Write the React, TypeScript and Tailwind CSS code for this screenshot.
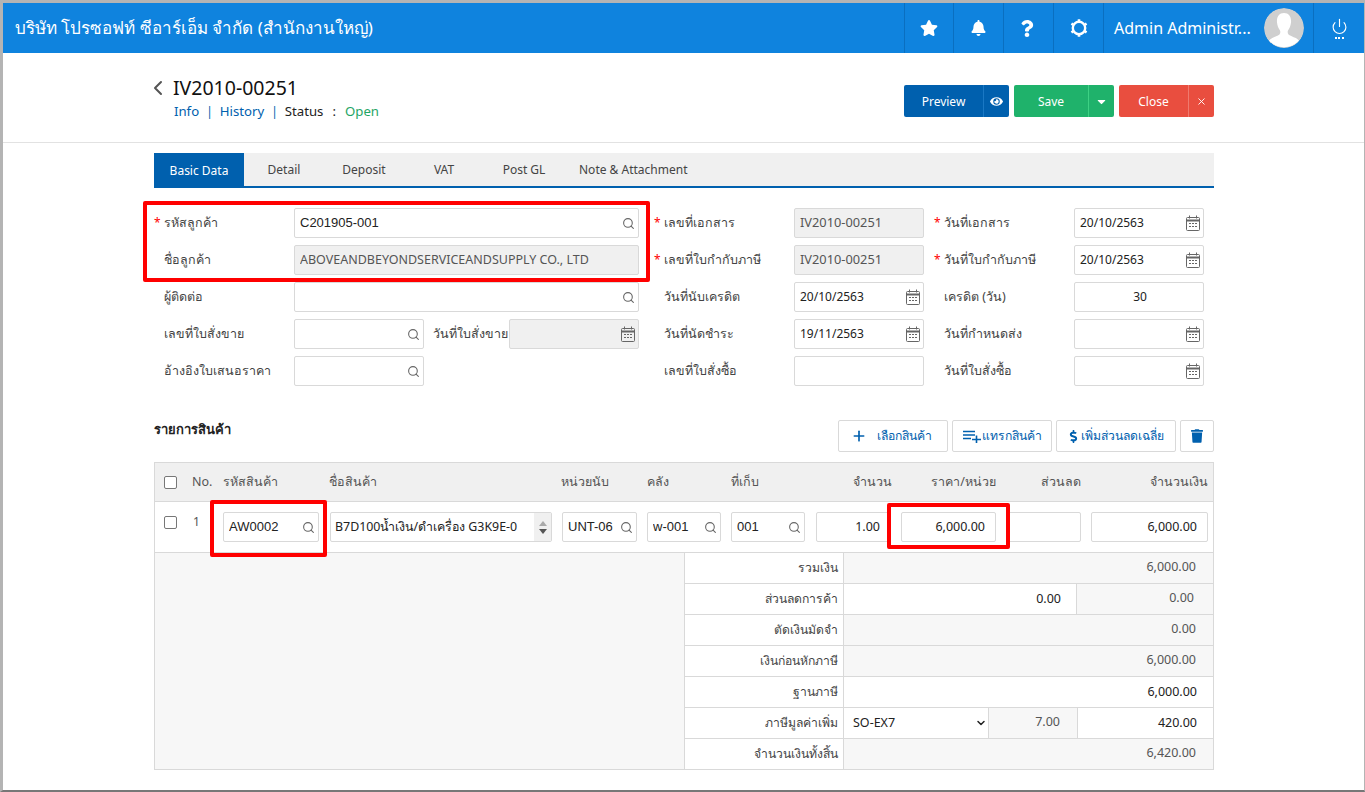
import { Search, Power, Plus, X, ChevronLeft, ChevronDown } from 'lucide-react'
import { FaStar, FaBell, FaQuestion, FaEye, FaTrash, FaDollarSign, FaCaretDown } from 'react-icons/fa'

function CalIcon() {
  return (
    <svg className="w-[14px] h-[16px] text-[#666]" viewBox="0 0 14 16" fill="none" stroke="currentColor">
      <rect x="0.5" y="2.5" width="13" height="13" rx="1" />
      <path d="M0.5 5.5h13" strokeWidth="2" />
      <path d="M3.5 0.5v3M10.5 0.5v3" />
      <path d="M3 8.5h2M6 8.5h2M9 8.5h2M3 11.5h2M6 11.5h2M9 11.5h2" />
    </svg>
  )
}

function SearchIcon() {
  return <Search className="w-[13px] h-[13px] text-[#666]" strokeWidth={2} />
}

function Field({ value, w, gray, icon, align, cls }: {
  value?: string
  w: string
  gray?: boolean
  icon?: 'search' | 'cal'
  align?: string
  cls?: string
}) {
  return (
    <div className={`${w} h-[30px] shrink-0 border border-[#d9d9d9] rounded-[2px] flex items-center pl-[5px] pr-[3px] ${gray ? 'bg-[#f0f0f0] text-[#555]' : 'bg-white text-[#222]'}`}>
      <span className={`flex-1 whitespace-nowrap overflow-hidden ${align ?? ''} ${cls ?? 'text-[12.5px]'}`}>{value}</span>
      {icon === 'search' && <SearchIcon />}
      {icon === 'cal' && <CalIcon />}
    </div>
  )
}

function Label({ text, req, w }: { text: string; req?: boolean; w: string }) {
  return (
    <div className={`${w} shrink-0 h-[30px] flex items-center text-[12.5px] text-[#444] whitespace-nowrap`}>
      <span className="w-[10px] text-[#f00] text-[12px] leading-none">{req ? '*' : ''}</span>
      {text}
    </div>
  )
}

function Head({ text, w, right }: { text: string; w: string; right?: boolean }) {
  return <div className={`${w} shrink-0 text-[12.5px] text-[#555] whitespace-nowrap ${right ? 'text-right' : ''}`}>{text}</div>
}

function SumRow({ label, children }: { label: string; children: React.ReactNode }) {
  return (
    <div className="h-[31px] last:h-[30px] flex border-b border-[#d9d9d9] last:border-b-0 text-[12.5px]">
      <div className="w-[159px] shrink-0 bg-white border-r border-[#d9d9d9] flex items-center justify-end pr-[5px] text-[12.2px] text-[#444]">{label}</div>
      {children}
    </div>
  )
}

function ToolBtn({ children, w }: { children: React.ReactNode; w: string }) {
  return (
    <div className={`${w} h-[32px] border border-[#d9d9d9] rounded-[2px] bg-white flex items-center justify-center text-[12.2px] text-[#0060ae] whitespace-nowrap`}>
      {children}
    </div>
  )
}

const arial = "font-['Liberation_Sans',sans-serif] text-[13px]"
const date = 'text-[12px]'
const amount = 'text-[12.5px] pr-[7px]'

export default function App() {
  return (
    <div className="relative w-[1365px] h-[792px] overflow-hidden bg-white border-t-[3px] border-l-[3px] border-r border-b-2 border-t-[#b4b4b4] border-l-[#b4b4b4] border-r-[#b4b4b4] border-b-[#777] font-['Noto_Sans','Liberation_Sans',sans-serif]">
      {/* top bar */}
      <div className="h-[50px] bg-[#0f83de] flex items-center text-white">
        <div className="flex-1 pl-[12px] text-[17px] whitespace-nowrap">บริษัท โปรซอฟท์ ซีอาร์เอ็ม จำกัด (สำนักงานใหญ่)</div>
        <div className="w-[49px] h-full border-l border-[#0a6fc0] flex items-center justify-center"><FaStar className="w-[18px] h-[18px]" /></div>
        <div className="w-[50px] h-full border-l border-[#0a6fc0] flex items-center justify-center"><FaBell className="w-[15px] h-[16px]" /></div>
        <div className="w-[50px] h-full border-l border-[#0a6fc0] flex items-center justify-center"><FaQuestion className="w-[14px] h-[17px] -ml-[3px]" /></div>
        <div className="w-[50px] h-full border-l border-[#0a6fc0] flex items-center justify-center">
          <svg className="w-[18px] h-[18px]" viewBox="0 0 18 18" fill="none" stroke="white">
            <circle cx="9" cy="9" r="6.200" strokeWidth="2.400" />
            <path d="M9 0.2v2M9 15.800v2M1.400 4.600l1.700 1M14.900 12.400l1.700 1M1.400 13.400l1.700-1M14.900 5.600l1.700-1" strokeWidth="2.600" />
          </svg>
        </div>
        <div className="w-[210px] h-full border-l border-[#0a6fc0] flex items-center pl-[10px] gap-[10px]">
          <span className="w-[140px] text-[16px] whitespace-nowrap">Admin Administr...</span>
          <svg className="w-[40px] h-[40px] rounded-full" viewBox="0 0 40 40">
            <circle cx="20" cy="20" r="20" fill="#cfcfcf" />
            <path d="M20 5c5 0 7.500 4 7 9.500-.3 3-1.500 6-3 8-.5 1-.5 3 .5 4 2.500 2 8 3 10.500 6a20 20 0 0 1-30 0c2.500-3 8-4 10.500-6 1-1 1-3 .5-4-1.500-2-2.700-5-3-8C12.500 9 15 5 20 5z" fill="white" />
          </svg>
        </div>
        <div className="w-[51px] h-full border-l border-[#0a6fc0] flex flex-col items-center justify-center">
          <Power className="w-[17px] h-[17px]" strokeWidth={1.6} />
          <span className="w-[9px] mt-[2px] border-t-2 border-dotted border-white"></span>
        </div>
      </div>

      {/* title + actions */}
      <div className="h-[90px] border-b border-[#e2e2e2] pl-[151px] pr-[150px] flex justify-between">
        <div className="pt-[23px]">
          <div className="flex items-center h-[24px] text-[19.500px] text-[#111]">
            <ChevronLeft className="w-[24px] h-[24px] text-[#555] -ml-[8px] mr-[3px]" strokeWidth={2} />
            <span>IV2010-00251</span>
          </div>
          <div className="flex items-center pl-[20px] text-[13.200px] h-[20px] mt-[2px] whitespace-nowrap">
            <span className="text-[#0060ae]">Info</span>
            <span className="mx-[7px] text-[#0060ae] text-[12px]">|</span>
            <span className="text-[#0060ae]">History</span>
            <span className="mx-[7px] text-[#0060ae] text-[12px]">|</span>
            <span className="text-[#222]">Status</span>
            <span className="mx-[9px] text-[#222]">:</span>
            <span className="text-[#1fa566]">Open</span>
          </div>
        </div>
        <div className="pt-[32px] flex gap-[5px] text-[12px] text-white">
          <div className="w-[105px] h-[32px] bg-[#0060ae] rounded-[2px] flex">
            <div className="w-[80px] pt-[1px] flex items-center justify-center border-r border-[#1a78c4]">Preview</div>
            <div className="flex-1 flex items-center justify-center"><FaEye className="w-[13px] h-[13px]" /></div>
          </div>
          <div className="w-[100px] h-[32px] bg-[#1fb26b] rounded-[2px] flex">
            <div className="w-[75px] pt-[1px] flex items-center justify-center border-r border-[#3dd184]">Save</div>
            <div className="flex-1 flex items-center justify-center"><FaCaretDown className="w-[13px] h-[13px]" /></div>
          </div>
          <div className="w-[95px] h-[32px] bg-[#e94e3f] rounded-[2px] flex">
            <div className="w-[70px] pt-[1px] flex items-center justify-center border-r border-[#ef7a6e]">Close</div>
            <div className="flex-1 flex items-center justify-center"><X className="w-[11px] h-[11px]" /></div>
          </div>
        </div>
      </div>

      <div className="pl-[151px] w-[1211px]">
        {/* tabs */}
        <div className="mt-[10px] h-[35px] bg-[#f0f0f0] border-b-2 border-[#0060ae] flex text-[12px] text-[#444]">
          <div className="w-[90px] h-[35px] bg-[#0060ae] text-white flex items-center justify-center">Basic Data</div>
          <div className="w-[80px] flex items-center justify-center">Detail</div>
          <div className="w-[80px] flex items-center justify-center">Deposit</div>
          <div className="w-[80px] flex items-center justify-center">VAT</div>
          <div className="w-[80px] flex items-center justify-center">Post GL</div>
          <div className="flex items-center ml-[15px]">Note &amp; Attachment</div>
        </div>

        {/* form */}
        <div className="mt-[20px] flex flex-col gap-[7px]">
          <div className="flex">
            <div className="w-[500px] flex">
              <Label text="รหัสลูกค้า" req w="w-[140px]" />
              <Field value="C201905-001" w="w-[345px]" icon="search" cls={arial} />
            </div>
            <Label text="เลขที่เอกสาร" req w="w-[140px]" />
            <Field value="IV2010-00251" w="w-[130px]" gray cls="text-[12.800px]" />
            <Label text="วันที่เอกสาร" req w="w-[150px] pl-[10px]" />
            <Field value="20/10/2563" w="w-[130px]" icon="cal" cls={date} />
          </div>
          <div className="flex">
            <div className="w-[500px] flex">
              <Label text="ชื่อลูกค้า" w="w-[140px]" />
              <Field value="ABOVEANDBEYONDSERVICEANDSUPPLY CO., LTD" w="w-[345px]" gray />
            </div>
            <Label text="เลขที่ใบกำกับภาษี" req w="w-[140px]" />
            <Field value="IV2010-00251" w="w-[130px]" gray cls="text-[12.800px]" />
            <Label text="วันที่ใบกำกับภาษี" req w="w-[150px] pl-[10px]" />
            <Field value="20/10/2563" w="w-[130px]" icon="cal" cls={date} />
          </div>
          <div className="flex">
            <div className="w-[500px] flex">
              <Label text="ผู้ติดต่อ" w="w-[140px]" />
              <Field w="w-[345px]" icon="search" />
            </div>
            <Label text="วันที่นับเครดิต" w="w-[140px]" />
            <Field value="20/10/2563" w="w-[130px]" icon="cal" cls={date} />
            <Label text="เครดิต (วัน)" w="w-[150px] pl-[10px]" />
            <Field value="30" w="w-[130px]" align="text-center" cls={date} />
          </div>
          <div className="flex">
            <div className="w-[500px] flex">
              <Label text="เลขที่ใบสั่งขาย" w="w-[140px]" />
              <Field w="w-[130px]" icon="search" />
              <div className="w-[85px] shrink-0 h-[30px] flex items-center justify-end pr-[1px] text-[12.5px] text-[#444] whitespace-nowrap">วันที่ใบสั่งขาย</div>
              <Field w="w-[130px]" gray icon="cal" />
            </div>
            <Label text="วันที่นัดชำระ" w="w-[140px]" />
            <Field value="19/11/2563" w="w-[130px]" icon="cal" cls={date} />
            <Label text="วันที่กำหนดส่ง" w="w-[150px] pl-[10px]" />
            <Field w="w-[130px]" icon="cal" />
          </div>
          <div className="flex">
            <div className="w-[500px] flex">
              <Label text="อ้างอิงใบเสนอราคา" w="w-[140px]" />
              <Field w="w-[130px]" icon="search" />
            </div>
            <Label text="เลขที่ใบสั่งซื้อ" w="w-[140px]" />
            <Field w="w-[130px]" />
            <Label text="วันที่ใบสั่งซื้อ" w="w-[150px] pl-[10px]" />
            <Field w="w-[130px]" icon="cal" />
          </div>
        </div>

        {/* items heading + toolbar */}
        <div className="mt-[34px] h-[32px] flex justify-between">
          <div className="text-[13px] font-bold text-[#222]">รายการสินค้า</div>
          <div className="flex gap-[4px]">
            <ToolBtn w="w-[110px]"><Plus className="w-[16px] h-[16px] mr-[10px] -ml-[4px]" strokeWidth={2.5} /><span>เลือกสินค้า</span></ToolBtn>
            <ToolBtn w="w-[100px]">
              <svg className="w-[20px] h-[14px]" viewBox="0 0 20 14" fill="none" stroke="currentColor" strokeWidth="1.6">
                <path d="M1 2.500h12M1 6h12M1 9.500h8M10 10.500h9M14.500 6.500v7.500" />
              </svg>
              <span>แทรกสินค้า</span>
            </ToolBtn>
            <ToolBtn w="w-[120px]"><FaDollarSign className="w-[11px] h-[13px] mr-[2px]" /><span>เพิ่มส่วนลดเฉลี่ย</span></ToolBtn>
            <ToolBtn w="w-[34px]"><FaTrash className="w-[12px] h-[14px]" /></ToolBtn>
          </div>
        </div>

        {/* items table */}
        <div className="mt-[10px] w-[1060px] border border-[#d9d9d9]">
          <div className="h-[39px] bg-[#f0f0f0] border-b border-[#d9d9d9] flex items-center">
            <span className="ml-[9px] w-[13px] h-[13px] border border-[#777] rounded-[2px] bg-white shrink-0"></span>
            <Head text="No." w="w-[31px] ml-[15px]" />
            <Head text="รหัสสินค้า" w="w-[106px]" />
            <Head text="ชื่อสินค้า" w="w-[232px]" />
            <Head text="หน่วยนับ" w="w-[86px]" />
            <Head text="คลัง" w="w-[84px]" />
            <Head text="ที่เก็บ" w="w-[74px]" />
            <Head text="จำนวน" w="w-[87px]" right />
            <Head text="ราคา/หน่วย" w="w-[104px]" right />
            <Head text="ส่วนลด" w="w-[85px]" right />
            <Head text="จำนวนเงิน" w="w-[127px]" right />
          </div>
          <div className="h-[51px] border-b border-[#d9d9d9] flex items-start pt-[10px]">
            <span className="ml-[9px] mt-[4px] w-[13px] h-[13px] border border-[#777] rounded-[2px] bg-white shrink-0"></span>
            <span className="ml-[16px] w-[30px] shrink-0 text-[12px] text-[#555] mt-[1px]">1</span>
            <Field value="AW0002" w="w-[96px]" icon="search" cls={arial} />
            <div className="ml-[11px] w-[222px] h-[30px] shrink-0 border border-[#d9d9d9] rounded-[2px] flex overflow-hidden text-[12.400px] text-[#222]">
              <div className="flex-1 pl-[4px] pt-[5px] whitespace-nowrap overflow-hidden">B7D100น้ำเงิน/ดำเครื่อง G3K9E-0</div>
              <div className="w-[17px] bg-[#f0f0f0] flex flex-col items-center justify-center gap-[3px]">
                <span className="w-0 h-0 border-x-[4px] border-x-transparent border-b-[5px] border-b-[#aaa]"></span>
                <span className="w-0 h-0 border-x-[4px] border-x-transparent border-t-[5px] border-t-[#555]"></span>
              </div>
            </div>
            <div className="ml-[10px]"><Field value="UNT-06" w="w-[75px]" icon="search" cls={arial} /></div>
            <div className="ml-[10px]"><Field value="w-001" w="w-[74px]" icon="search" cls={arial} /></div>
            <div className="ml-[10px]"><Field value="001" w="w-[74px]" icon="search" cls={arial} /></div>
            <div className="ml-[11px]"><Field value="1.00" w="w-[75px]" align="text-right" cls={amount} /></div>
            <div className="ml-[10px]"><Field value="6,000.00" w="w-[95px]" align="text-right" cls={amount} /></div>
            <div className="ml-[10px]"><Field w="w-[75px]" /></div>
            <div className="ml-[10px]"><Field value="6,000.00" w="w-[117px]" align="text-right" cls={amount} /></div>
          </div>
          <div className="flex">
            <div className="w-[530px] shrink-0 bg-[#f7f7f7] border-r border-[#d9d9d9]"></div>
            <div className="flex-1">
              <SumRow label="รวมเงิน"><div className="flex-1 bg-[#f7f7f7] flex items-center justify-end pr-[17px] pb-[1px] text-[#555]">6,000.00</div></SumRow>
              <SumRow label="ส่วนลดการค้า">
                <div className="w-[233px] bg-white border-r border-[#d9d9d9] flex items-center justify-end pr-[15px] text-[#222]">0.00</div>
                <div className="flex-1 bg-[#f7f7f7] flex items-center justify-end pr-[19px] pb-[1px] text-[#555]">0.00</div>
              </SumRow>
              <SumRow label="ตัดเงินมัดจำ"><div className="flex-1 bg-[#f7f7f7] flex items-center justify-end pr-[17px] pb-[1px] text-[#555]">0.00</div></SumRow>
              <SumRow label="เงินก่อนหักภาษี"><div className="flex-1 bg-[#f7f7f7] flex items-center justify-end pr-[17px] pb-[1px] text-[#555]">6,000.00</div></SumRow>
              <SumRow label="ฐานภาษี"><div className="flex-1 bg-white flex items-center justify-end pr-[16px] text-[#222]">6,000.00</div></SumRow>
              <SumRow label="ภาษีมูลค่าเพิ่ม">
                <div className="w-[145px] bg-white border-r border-[#d9d9d9] flex items-center justify-between pl-[9px] pr-[1px] text-[#222]">SO-EX7<ChevronDown className="w-[12px] h-[12px]" strokeWidth={3} /></div>
                <div className="w-[89px] bg-[#f7f7f7] border-r border-[#d9d9d9] flex items-center justify-end pr-[17px] pb-[1px] text-[#555]">7.00</div>
                <div className="flex-1 bg-white flex items-center justify-end pr-[16px] text-[#222]">420.00</div>
              </SumRow>
              <SumRow label="จำนวนเงินทั้งสิ้น"><div className="flex-1 bg-[#f7f7f7] flex items-center justify-end pr-[17px] pb-[1px] text-[#555]">6,420.00</div></SumRow>
            </div>
          </div>
        </div>
      </div>

      {/* red annotation boxes */}
      <div className="absolute left-[140px] top-[198px] w-[507px] h-[81px] border-[4px] border-[#f00] rounded-[2px]"></div>
      <div className="absolute left-[207px] top-[497px] w-[117px] h-[57px] border-[4px] border-[#f00] rounded-[2px]"></div>
      <div className="absolute left-[884px] top-[500px] w-[123px] h-[46px] border-[4px] border-[#f00] rounded-[2px]"></div>
    </div>
  )
}
